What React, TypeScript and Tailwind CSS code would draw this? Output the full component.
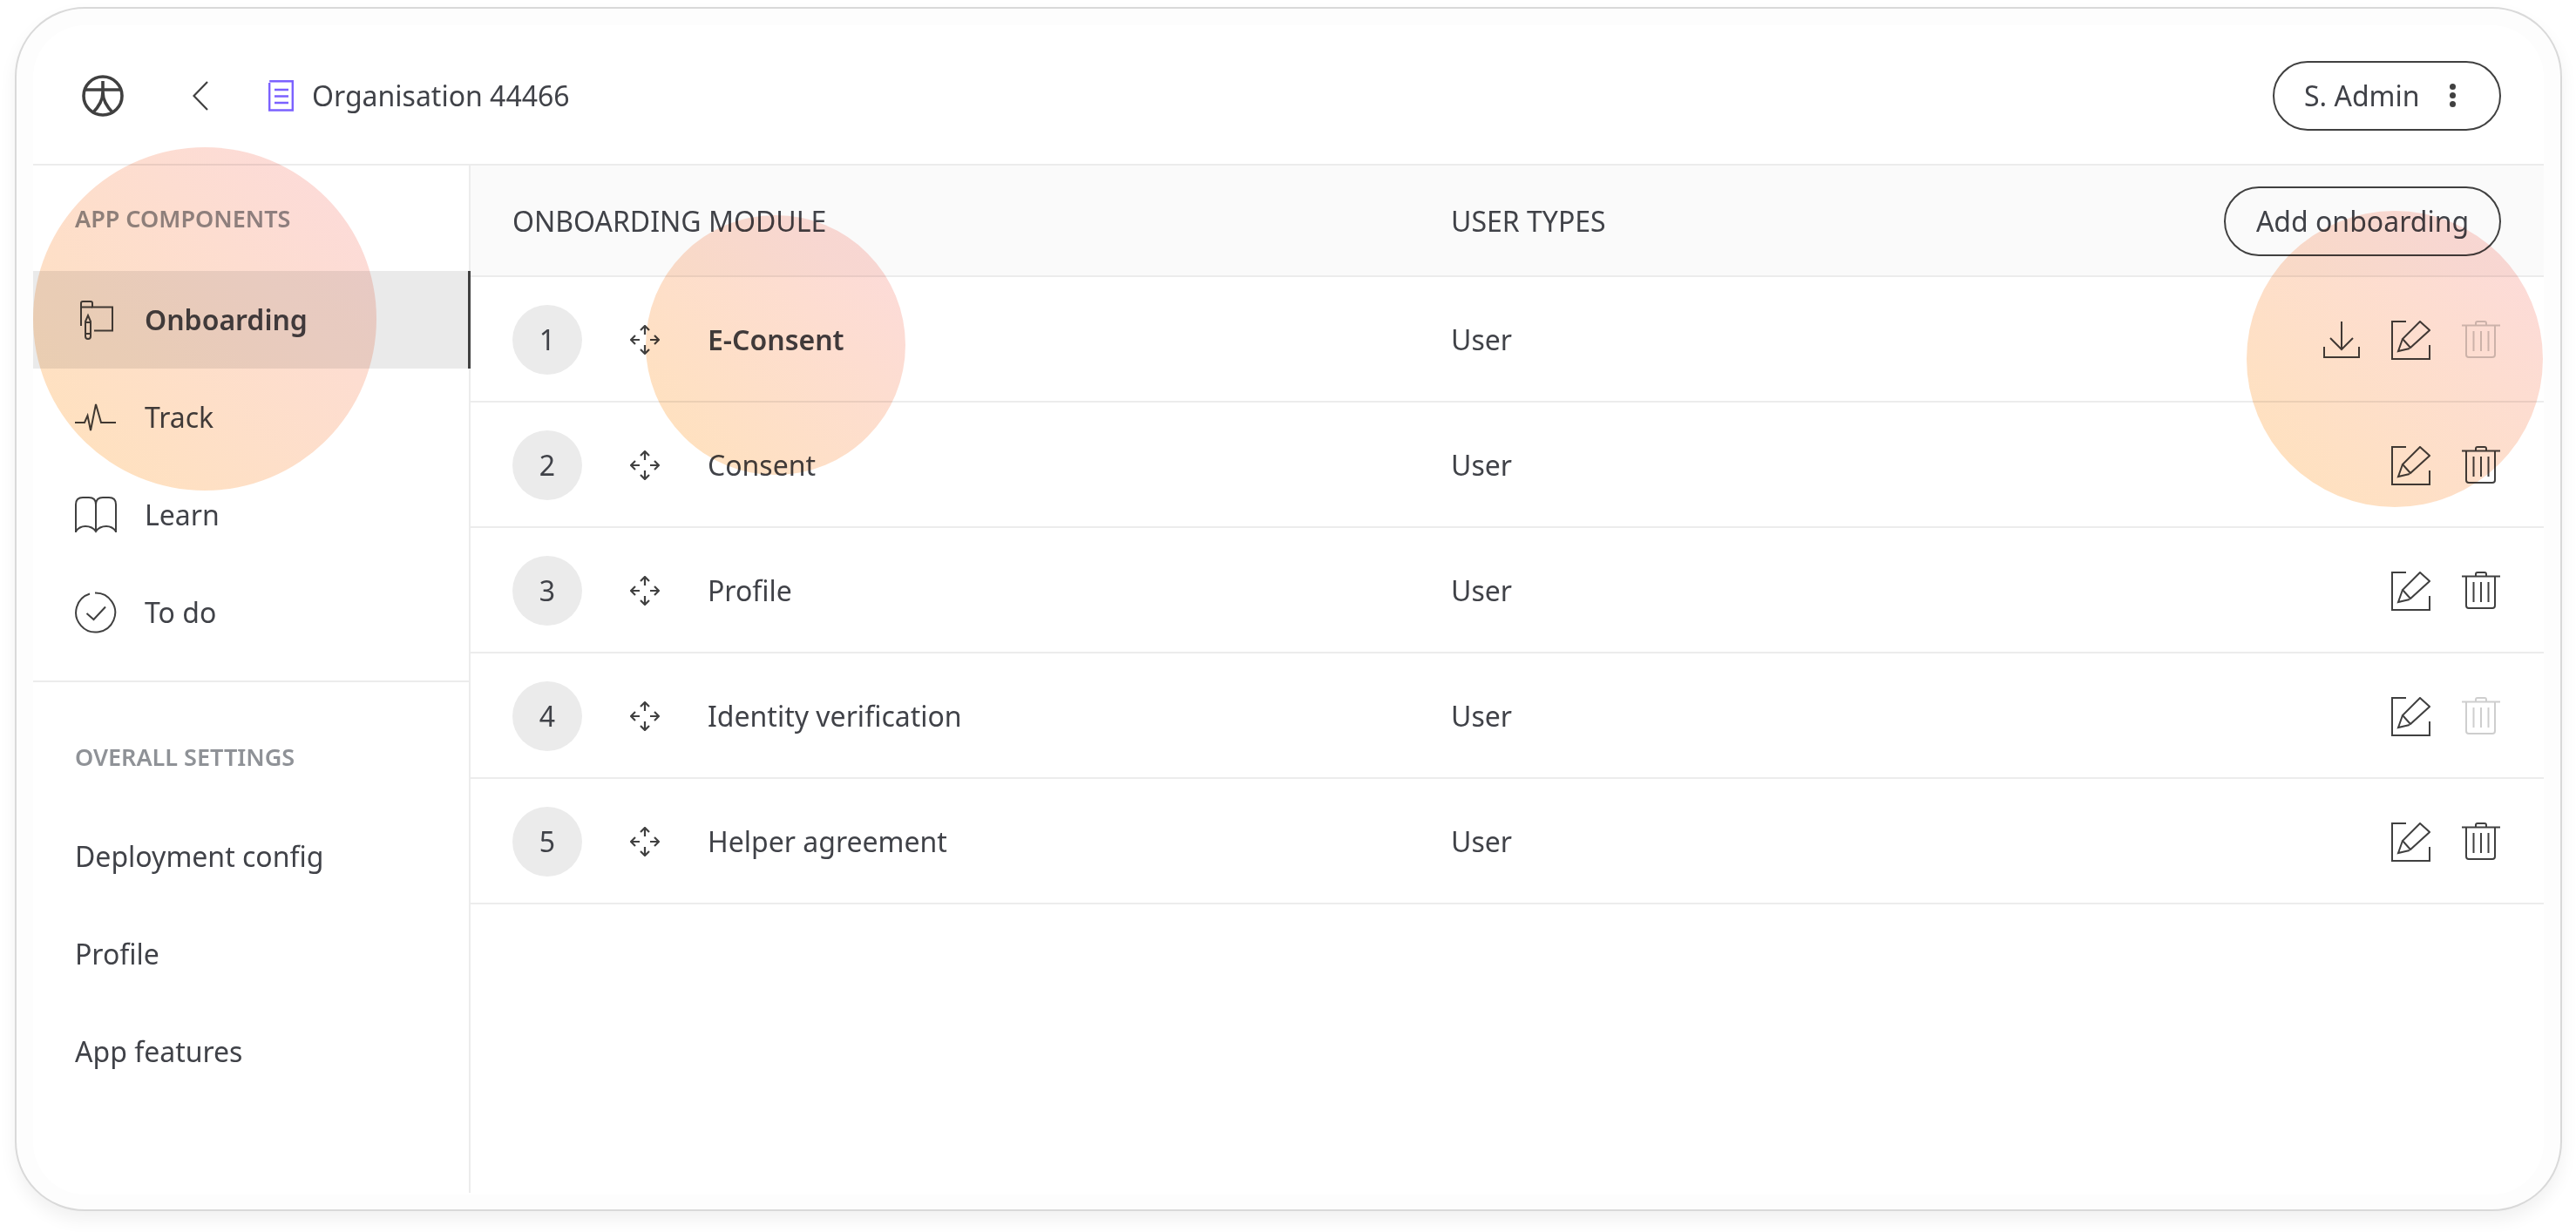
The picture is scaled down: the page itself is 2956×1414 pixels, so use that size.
import React from 'react';

const font = '[font-family:"Noto_Sans",sans-serif]';

function Logo() {
    return (
        <svg width="48" height="48" viewBox="0 0 48 48" fill="none" stroke="#404040" strokeWidth="3.6">
            <circle cx="24" cy="24" r="22" />
            <path d="M3 17H45" />
            <path d="M24 7V20C24 30 18 38 12 44" />
            <path d="M24 20C24 30 30 38 36 44" />
        </svg>
    );
}

function Chevron() {
    return (
        <svg width="18" height="34" viewBox="0 0 18 34" fill="none" stroke="#404040" strokeWidth="2.2">
            <path d="M17 1L1.5 17L17 33" />
        </svg>
    );
}

function DocIcon() {
    return (
        <svg width="29" height="36" viewBox="0 0 29 36" fill="none" stroke="#7b61ff" strokeWidth="2.4">
            <path d="M1.2 3V34.5H27.8V1.2H1.2" />
            <path d="M7 11H23M7 18.5H23M7 26H23" />
        </svg>
    );
}

function OnboardingIcon() {
    return (
        <svg width="38" height="45" viewBox="0 0 38 45" fill="none" stroke="#404040" strokeWidth="2">
            <path d="M1 29V3Q1 1 3 1H12Q14 1 14 3V7.5H37V34.5H16" />
            <path d="M1 7.5H14" />
            <path d="M6 24L9 17L12 24V41Q12 44 9 44Q6 44 6 41Z" />
            <path d="M6 25H12M6 38H12" />
        </svg>
    );
}

function TrackIcon() {
    return (
        <svg width="48" height="34" viewBox="0 0 48 34" fill="none" stroke="#404040" strokeWidth="2">
            <path d="M0 23H11L14.5 15L18 32L24 2L30 23H47" />
        </svg>
    );
}

function LearnIcon() {
    return (
        <svg width="48" height="42" viewBox="0 0 48 42" fill="none" stroke="#404040" strokeWidth="2">
            <path d="M1 41V9Q1 1 9 1H16Q24 1 24 9V38" />
            <path d="M47 41V9Q47 1 39 1H32Q24 1 24 9" />
            <path d="M1 40Q5 34 12 34Q20 34 24 40Q28 34 36 34Q43 34 47 40" />
        </svg>
    );
}

function TodoIcon() {
    return (
        <svg width="48" height="48" viewBox="0 0 48 48" fill="none" stroke="#404040" strokeWidth="2">
            <path d="M17 2.5A22.5 22.5 0 1 0 23 1.5" />
            <path d="M13.5 25L21.5 32L35 17.5" />
        </svg>
    );
}

function MoveIcon() {
    return (
        <svg width="34" height="34" viewBox="0 0 34 34" fill="none" stroke="#404040" strokeWidth="2.2">
            <path d="M17 1V11M12 6L17 1L22 6" />
            <path d="M17 23V33M12 28L17 33L22 28" />
            <path d="M1 17H11M6 12L1 17L6 22" />
            <path d="M23 17H33M28 12L33 17L28 22" />
        </svg>
    );
}

function DownloadIcon() {
    return (
        <svg width="42" height="42" viewBox="0 0 42 42" fill="none" stroke="#404040" strokeWidth="2">
            <path d="M21 0V32M8 19L21 32L34 19" />
            <path d="M1 29V41H41V29" />
        </svg>
    );
}

function EditIcon() {
    return (
        <svg width="45" height="45" viewBox="0 0 45 45" fill="none" stroke="#404040" strokeWidth="2">
            <path d="M17 1H1V44H44V28" />
            <path d="M33 1L44 11L22 31L13 21Z" />
            <path d="M13 21L8 35L21 32" />
        </svg>
    );
}

function TrashIcon({ disabled }: { disabled?: boolean }) {
    return (
        <svg width="44" height="44" viewBox="0 0 44 44" fill="none" stroke="#404040" strokeWidth="2" className={disabled ? 'opacity-25' : ''}>
            <path d="M0 5.5H44" />
            <path d="M16 5V3Q16 1 18 1H26Q28 1 28 3V5" />
            <path d="M5 6V39Q5 42 8 42H35Q38 42 38 39V6" />
            <path d="M13.5 12V35M22 12V35M30.5 12V35" />
        </svg>
    );
}

const modules = [
    { name: 'E-Consent', canDelete: false, bold: true, download: true },
    { name: 'Consent', canDelete: true },
    { name: 'Profile', canDelete: true },
    { name: 'Identity verification', canDelete: false },
    { name: 'Helper agreement', canDelete: true },
];

function Row({ index, name, canDelete, bold, download }: { index: number; name: string; canDelete: boolean; bold?: boolean; download?: boolean }) {
    return (
        <div className="flex h-[144px] items-center border-b-2 border-[#ececec] pl-[48px] pr-[50px] pt-[2px]">
            <div className="flex w-[1077px] items-center">
                <div className="flex h-[80px] w-[80px] items-center justify-center rounded-full bg-[#ebebeb]">{index}</div>
                <div className="ml-[55px] mr-[55px] flex"><MoveIcon /></div>
                <span className={bold ? 'font-semibold' : ''}>{name}</span>
            </div>
            <div className="flex-1">User</div>
            <div className="flex items-center gap-[36px]">
                {download && <DownloadIcon />}
                <EditIcon />
                <TrashIcon disabled={!canDelete} />
            </div>
        </div>
    );
}

function NavItem({ label, icon, active }: { label: string; icon: React.ReactNode; active?: boolean }) {
    return (
        <div className={`flex h-[112px] items-center pl-[48px] ${active ? 'relative -mr-[2px] border-r-[3px] border-[#404040] bg-[#eaeaea] font-semibold' : ''}`}>
            <div className="flex w-[80px]">{icon}</div>
            {label}
        </div>
    );
}

function SettingItem({ label }: { label: string }) {
    return <div className="flex h-[112px] items-center pl-[48px]">{label}</div>;
}

export default function App() {
    return (
        <div className={`relative h-[1414px] w-[2956px] overflow-hidden bg-white pl-[17px] pt-[8px] text-[32px] text-[#404248] ${font}`}>
            <div className="h-[1382px] w-[2923px] rounded-[80px] border-2 border-[#d9d9d9] bg-[#fdfdfd] px-[19px] pt-[19px] shadow-[0_10px_20px_rgba(0,0,0,0.06)]">
                <div className="h-[1342px] w-[2881px] rounded-[60px] bg-white">
                    {/* top bar */}
                    <div className="flex h-[161px] items-center border-b-2 border-[#ececec] pl-[56px] pr-[49px] pt-[2px]">
                        <Logo />
                        <div className="ml-[79px] flex"><Chevron /></div>
                        <div className="ml-[69px] flex"><DocIcon /></div>
                        <span className="ml-[21px]">Organisation 44466</span>
                        <div className="ml-auto flex h-[80px] w-[262px] items-center rounded-full border-2 border-[#404040] pl-[34px] pr-[50px]">
                            <span>S. Admin</span>
                            <span className="ml-auto flex flex-col gap-[3px]">
                                <span className="h-[7px] w-[7px] rounded-full bg-[#404040]" />
                                <span className="h-[7px] w-[7px] rounded-full bg-[#404040]" />
                                <span className="h-[7px] w-[7px] rounded-full bg-[#404040]" />
                            </span>
                        </div>
                    </div>

                    <div className="flex h-[1179px]">
                        {/* sidebar */}
                        <div className="w-[502px] shrink-0 border-r-2 border-[#ececec]">
                            <div className="flex h-[121px] items-center pl-[48px] pt-[2px] text-[27px] font-semibold text-[#8f9297]">APP COMPONENTS</div>
                            <NavItem label="Onboarding" icon={<div className="ml-[6px] flex"><OnboardingIcon /></div>} active />
                            <NavItem label="Track" icon={<TrackIcon />} />
                            <NavItem label="Learn" icon={<LearnIcon />} />
                            <NavItem label="To do" icon={<TodoIcon />} />
                            <div className="mt-[22px] border-t-2 border-[#ececec]" />
                            <div className="flex h-[144px] items-center pl-[48px] pt-[28px] text-[27px] font-semibold text-[#8f9297]">OVERALL SETTINGS</div>
                            <SettingItem label="Deployment config" />
                            <SettingItem label="Profile" />
                            <SettingItem label="App features" />
                        </div>

                        {/* table */}
                        <div className="flex-1">
                            <div className="flex h-[128px] items-center border-b-2 border-[#ececec] bg-[#fafafa] pl-[48px] pr-[49px] pt-[2px]">
                                <div className="w-[1077px]">ONBOARDING MODULE</div>
                                <div>USER TYPES</div>
                                <div className="ml-auto flex h-[80px] w-[318px] items-center justify-center rounded-full border-2 border-[#404040]">Add onboarding</div>
                            </div>
                            {modules.map((m, i) => (
                                <Row key={m.name} index={i + 1} {...m} />
                            ))}
                        </div>
                    </div>
                </div>
            </div>

            {/* highlight blobs */}
            <div className="pointer-events-none absolute left-[38px] top-[169px] h-[394px] w-[394px] rounded-full bg-linear-to-tr from-[#ffe2bb] to-[#fcdadc] mix-blend-multiply" />
            <div className="pointer-events-none absolute left-[741px] top-[247px] h-[298px] w-[298px] rounded-full bg-linear-to-tr from-[#ffe2bb] to-[#fcdadc] mix-blend-multiply" />
            <div className="pointer-events-none absolute left-[2578px] top-[242px] h-[340px] w-[340px] rounded-full bg-linear-to-tr from-[#ffe2bb] to-[#fcdadc] mix-blend-multiply" />
        </div>
    );
}
